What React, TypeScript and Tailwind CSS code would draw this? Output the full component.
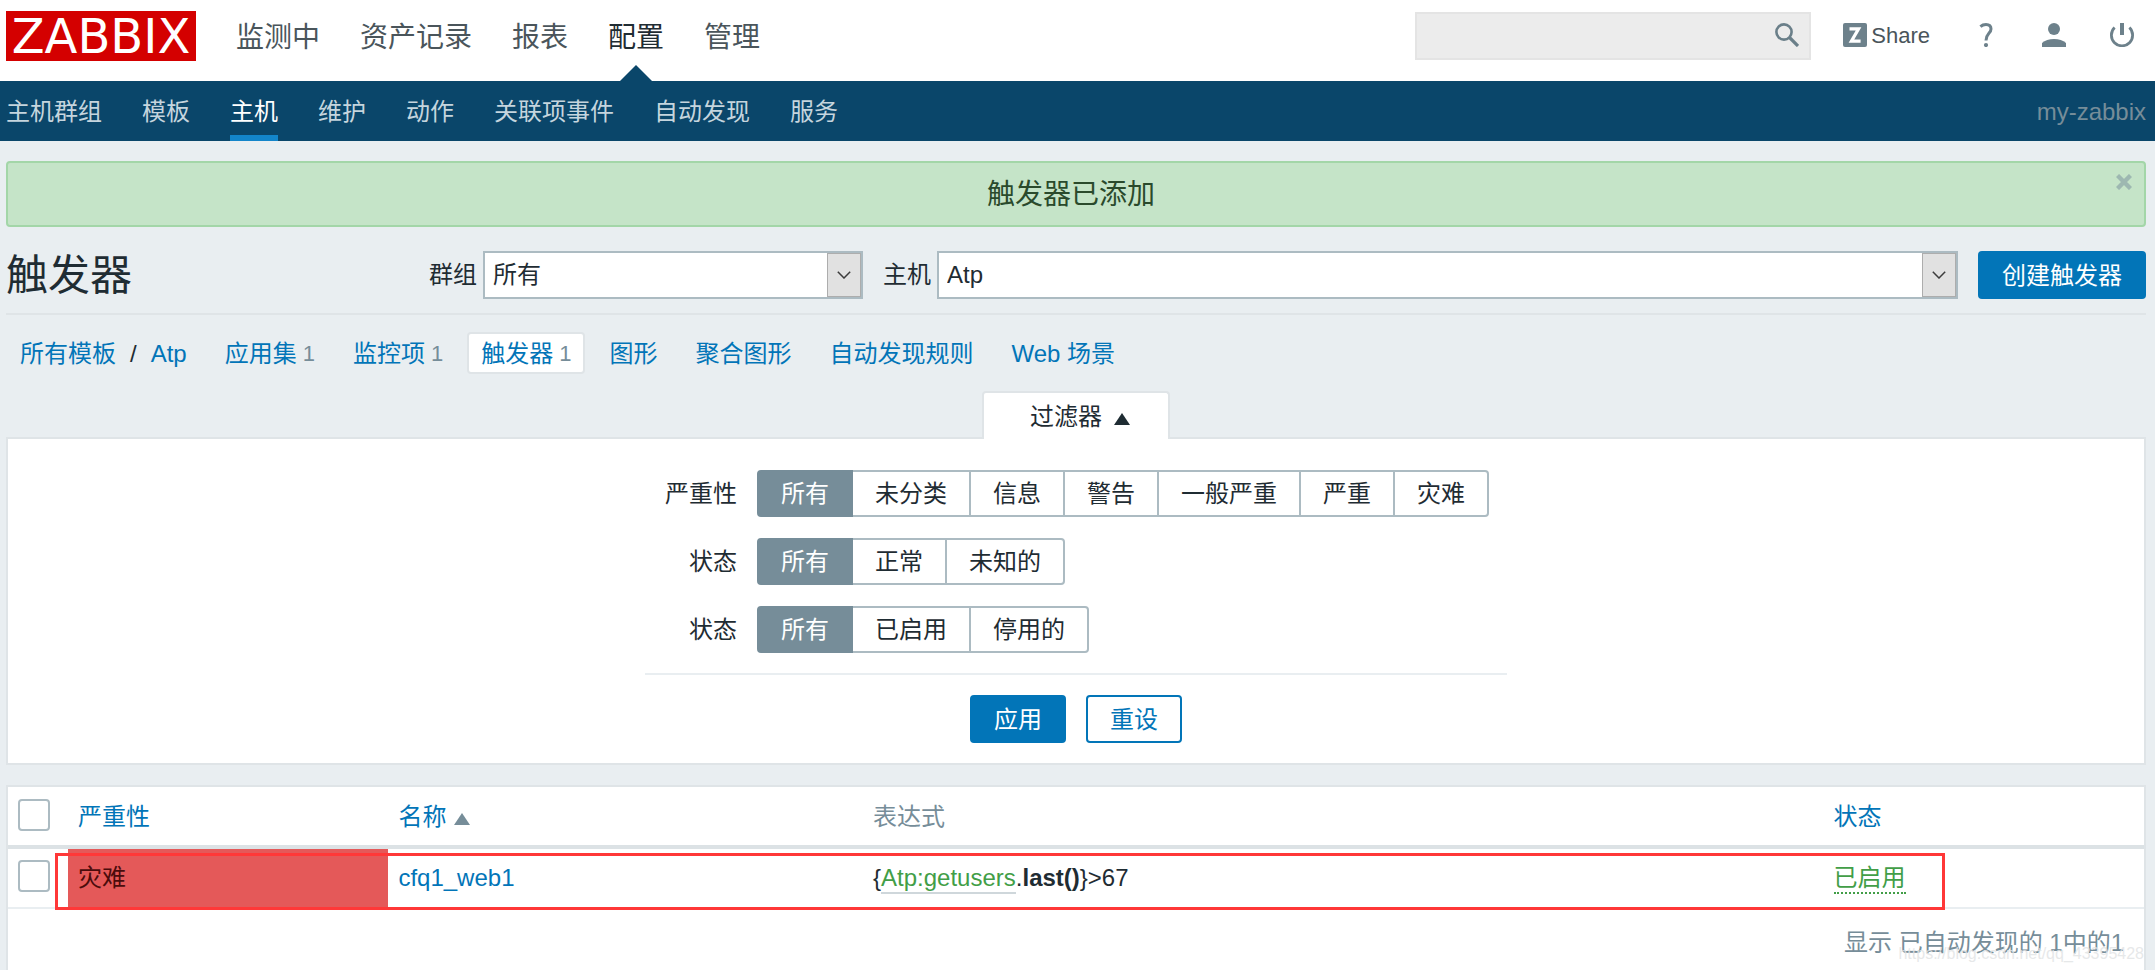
import { useState } from 'react';
import clsx from 'clsx';

const mainMenu = ['监测中', '资产记录', '报表', '配置', '管理'];
const subMenu = ['主机群组', '模板', '主机', '维护', '动作', '关联项事件', '自动发现', '服务'];

const tabs = [
  { label: '应用集', count: 1 },
  { label: '监控项', count: 1 },
  { label: '触发器', count: 1, active: true },
  { label: '图形' },
  { label: '聚合图形' },
  { label: '自动发现规则' },
  { label: 'Web 场景' },
];

const filters = [
  { name: 'severity', label: '严重性', options: ['所有', '未分类', '信息', '警告', '一般严重', '严重', '灾难'] },
  { name: 'state', label: '状态', options: ['所有', '正常', '未知的'] },
  { name: 'status', label: '状态', options: ['所有', '已启用', '停用的'] },
];

function SearchIcon() {
  return (
    <svg width="24" height="24" viewBox="0 0 24 24" fill="none" stroke="#6a7f89">
      <circle cx="9" cy="9" r="7.6" strokeWidth="2.6" />
      <path d="M14.5 14.5 L23 23" strokeWidth="3.2" />
    </svg>
  );
}

function ShareIcon() {
  return (
    <svg width="24" height="24" viewBox="0 0 24 24">
      <rect width="24" height="24" rx="2" fill="#6d818b" />
      <path d="M6.5 5.8 H15.6 L8.4 18.2 H17.6" fill="none" stroke="#fff" strokeWidth="3.2" />
    </svg>
  );
}

function HelpIcon() {
  return (
    <svg width="24" height="24" viewBox="0 0 24 24" fill="none" stroke="#6d818b">
      <path d="M6.4 3.6 C8 2.2 9.8 1.5 12 1.5 C15.2 1.5 17 3.2 17 6 C17 10.5 12 10.5 12 17.5" strokeWidth="3" />
      <circle cx="12" cy="22" r="2.1" fill="#6d818b" stroke="none" />
    </svg>
  );
}

function UserIcon() {
  return (
    <svg width="24" height="24" viewBox="0 0 24 24" fill="#6d818b">
      <circle cx="12" cy="6" r="6" />
      <path d="M0 24 V20 C3 17.3 7 16 12 16 C17 16 21 17.3 24 20 V24 Z" />
    </svg>
  );
}

function PowerIcon() {
  return (
    <svg width="24" height="24" viewBox="0 0 24 24" fill="none" stroke="#6d818b">
      <path d="M12 0 V12" strokeWidth="4" />
      <path d="M4.6 4.6 A10.6 10.6 0 1 0 19.4 4.6" strokeWidth="2.8" />
    </svg>
  );
}

function Triangle({ className }: { className: string }) {
  return (
    <svg width="16" height="12" viewBox="0 0 16 12" className={className}>
      <path d="M8 0 L16 12 H0 Z" fill="currentColor" />
    </svg>
  );
}

function Select({ id, value, className }: { id: string; value: string; className: string }) {
  return (
    <div className={clsx('relative h-12', className)}>
      <select
        id={id}
        defaultValue={value}
        className="w-full h-full appearance-none rounded-none border-2 border-[#acbbc2] bg-white pl-2 pr-10"
      >
        <option>{value}</option>
      </select>
      <span className="pointer-events-none absolute top-0.5 bottom-0.5 right-0.5 w-[34px] border border-[#adadad] bg-[#e1e1e1] flex items-center justify-center">
        <svg width="14" height="8" viewBox="0 0 14 8" fill="none" stroke="#3c3c3c" strokeWidth="1.5">
          <path d="M0.8 0.8 L7 7 L13.2 0.8" />
        </svg>
      </span>
    </div>
  );
}

function Checkbox({ label }: { label: string }) {
  return (
    <input
      type="checkbox"
      aria-label={label}
      className="block size-8 mb-1 appearance-none rounded border-2 border-[#acbbc2] bg-white checked:bg-[#acbbc2]"
    />
  );
}

export default function App() {
  const [selected, setSelected] = useState<Record<string, string>>({
    severity: '所有',
    state: '所有',
    status: '所有',
  });
  const [showMessage, setShowMessage] = useState(true);

  return (
    <div className="min-h-screen flex flex-col bg-[#e9eef1] text-[#1f2c33] text-[24px] leading-8 font-['Liberation_Sans','Noto_Sans_CJK_SC',sans-serif]">
      {/* Top navigation */}
      <header className="h-[81px] bg-white flex items-start pl-1.5 pr-[21px]">
        <a
          href="#"
          className="mt-[11px] mr-10 w-[190px] h-[50px] bg-[#d40000] text-white text-[48px] leading-[50px] text-center font-['DejaVu_Sans',sans-serif]"
        >
          ZABBIX
        </a>
        <nav className="flex gap-10 h-full text-[28px]">
          {mainMenu.map((item) => (
            <a
              key={item}
              href="#"
              className={clsx('relative pt-[22px]', item === '配置' ? 'text-[#1f2c33]' : 'text-[#4a555b]')}
            >
              {item}
              {item === '配置' && (
                <svg width="32" height="16" viewBox="0 0 32 16" className="absolute bottom-0 left-1/2 -translate-x-1/2">
                  <path d="M16 0 L32 16 H0 Z" fill="#0a466a" />
                </svg>
              )}
            </a>
          ))}
        </nav>
        <div className="ml-auto mt-3 flex items-start">
          <form className="relative mr-8">
            <input
              type="text"
              aria-label="搜索"
              className="block w-[396px] h-12 border-2 border-[#e4e4e4] bg-[#ececec] pl-2 pr-12"
            />
            <button type="button" aria-label="搜索" className="absolute top-[11px] right-3">
              <SearchIcon />
            </button>
          </form>
          <div className="mt-[11px] flex items-center gap-11 h-6">
            <a href="#" className="flex items-center gap-1 text-[22px] text-[#4a555b]">
              <ShareIcon />
              <span className="pt-0.5">Share</span>
            </a>
            <a href="#" aria-label="帮助"><HelpIcon /></a>
            <a href="#" aria-label="用户"><UserIcon /></a>
            <a href="#" aria-label="退出"><PowerIcon /></a>
          </div>
        </div>
      </header>

      {/* Sub navigation */}
      <div className="h-[60px] bg-[#0a466a] flex justify-between pl-1.5 pr-[9px]">
        <nav className="flex gap-10">
          {subMenu.map((item) => (
            <a
              key={item}
              href="#"
              className={clsx(
                'pt-[15px] border-b-[6px]',
                item === '主机' ? 'text-white border-[#1385ca]' : 'text-[#c5d5de] border-transparent'
              )}
            >
              {item}
            </a>
          ))}
        </nav>
        <span className="pt-[15px] text-[#768d99]">my-zabbix</span>
      </div>

      <main className="flex-1 flex flex-col pl-1.5 pr-[9px] pt-5">
        {/* Message */}
        {showMessage && (
          <div className="relative h-[66px] mb-6 rounded border-2 border-[#a3d6a8] bg-[#c5e4c8] pt-0.5 pr-[10px] flex items-center justify-center text-[28px] text-[#2a4a2c]">
            触发器已添加
            <button
              type="button"
              aria-label="关闭"
              onClick={() => setShowMessage(false)}
              className="absolute top-[11px] right-3"
            >
              <svg width="16" height="16" viewBox="0 0 16 16" stroke="#9db8b1" strokeWidth="4.4">
                <path d="M1.5 1.5 L14.5 14.5 M14.5 1.5 L1.5 14.5" />
              </svg>
            </button>
          </div>
        )}

        {/* Title and host selection */}
        <div className="flex items-center h-16 pb-3.5 border-b-2 border-[#dfe4e7]">
          <h1 className="text-[42px] leading-12 pt-0.5 mr-[297px]">触发器</h1>
          <form className="flex-1 flex items-center">
            <label htmlFor="group" className="mr-1.5">群组</label>
            <Select id="group" value="所有" className="w-[380px]" />
            <label htmlFor="host" className="ml-5 mr-1.5">主机</label>
            <Select id="host" value="Atp" className="flex-1" />
            <button type="button" className="ml-5 h-12 pt-0.5 px-6 rounded bg-[#0275b8] text-white">创建触发器</button>
          </form>
        </div>

        {/* Breadcrumbs */}
        <nav className="mt-[17px] flex items-center gap-2.5 text-[#0275b8]">
          <div className="flex items-center pt-0.5">
            <a href="#" className="px-3.5">所有模板</a>
            <span className="text-[#1f2c33]">/</span>
            <a href="#" className="px-3.5">Atp</a>
          </div>
          {tabs.map((tab) => (
            <a
              key={tab.label}
              href="#"
              className={clsx(
                'h-[42px] pt-0.5 px-3 rounded border-2 flex items-center gap-1.5',
                tab.active ? 'bg-white border-[#dfe4e7]' : 'border-transparent'
              )}
            >
              {tab.label}
              {tab.count && <span className="text-[22px] text-[#768d99]">{tab.count}</span>}
            </a>
          ))}
        </nav>

        {/* Filter */}
        <div className="mt-[17px] flex flex-col items-center">
          <button
            type="button"
            className="relative h-12 -mb-0.5 pl-[46px] pr-[38px] pt-0.5 flex items-center gap-3 rounded-t border-2 border-b-0 border-[#dfe4e7] bg-white"
          >
            过滤器
            <Triangle className="mt-1" />
          </button>
          <form className="w-full border-2 border-[#dfe4e7] bg-white pt-[31px] pb-5 flex flex-col items-center">
            <div className="w-[862px] pb-5 border-b-2 border-[#e9eef1] flex flex-col gap-[21px]">
              {filters.map((filter) => (
                <fieldset key={filter.name} className="flex items-center">
                  <legend className="float-left w-[92px] mr-5 text-right">{filter.label}</legend>
                  <div className="flex">
                    {filter.options.map((option) => (
                      <label
                        key={option}
                        className={clsx(
                          'h-[47px] px-[22px] border-2 -ml-0.5 flex items-center cursor-pointer first:ml-0 first:rounded-l last:rounded-r',
                          selected[filter.name] === option
                            ? 'relative bg-[#768d99] border-[#768d99] text-white'
                            : 'bg-white border-[#acbbc2]'
                        )}
                      >
                        <input
                          type="radio"
                          name={filter.name}
                          value={option}
                          checked={selected[filter.name] === option}
                          onChange={() => setSelected({ ...selected, [filter.name]: option })}
                          className="sr-only"
                        />
                        {option}
                      </label>
                    ))}
                  </div>
                </fieldset>
              ))}
            </div>
            <div className="mt-5 flex gap-5">
              <button type="button" className="h-12 pt-0.5 px-[22px] rounded border-2 border-[#0275b8] bg-[#0275b8] text-white">应用</button>
              <button type="reset" className="h-12 pt-0.5 px-[22px] rounded border-2 border-[#0275b8] bg-white text-[#0275b8]">重设</button>
            </div>
          </form>
        </div>

        {/* Trigger list */}
        <div className="relative flex-1 mt-5 border-2 border-b-0 border-[#dfe4e7] bg-white">
          <table className="w-full table-fixed border-separate border-spacing-0 text-left">
            <thead>
              <tr className="h-[62px] *:border-b-4 *:border-[#dce2e5] *:font-normal *:px-2.5 *:pt-0.5">
                <th className="w-[60px]"><Checkbox label="全选" /></th>
                <th className="w-3/20"><a href="#" className="text-[#0275b8]">严重性</a></th>
                <th className="w-2/9">
                  <a href="#" className="flex items-center gap-2 text-[#0275b8]">
                    名称
                    <Triangle className="mt-1 text-[#768d99]" />
                  </a>
                </th>
                <th className="text-[#768d99]">表达式</th>
                <th className="w-3/20"><a href="#" className="text-[#0275b8]">状态</a></th>
              </tr>
            </thead>
            <tbody>
              <tr className="h-[60px] *:border-b-2 *:border-[#e9eef1] *:px-2.5">
                <td><Checkbox label="cfq1_web1" /></td>
                <td className="bg-[#e45959] text-[#4b0c0c]">灾难</td>
                <td><a href="#" className="text-[#0275b8]">cfq1_web1</a></td>
                <td>
                  {'{'}
                  <a href="#" className="inline-block leading-7 border-b-2 border-[#cfd7db] text-[#429e47]">Atp:getusers</a>
                  .<b>last()</b>
                  {'}>67'}
                </td>
                <td>
                  <a href="#" className="inline-block leading-7 border-b-2 border-dotted border-[#429e47] text-[#429e47]">已启用</a>
                </td>
              </tr>
            </tbody>
          </table>
          <p className="pt-[18px] pr-5 text-right text-[#768d99]">显示 已自动发现的 1中的1</p>

          {/* Highlight around the new trigger */}
          <div className="pointer-events-none absolute top-[66px] left-[47px] right-[199px] h-[57px] border-[3px] border-[#ff3838]" />
          <span className="pointer-events-none absolute bottom-1 right-0 text-[16px] leading-6 text-[#e2e4e5]/85">
            https://blog.csdn.net/qq_43395428
          </span>
        </div>
      </main>
    </div>
  );
}
